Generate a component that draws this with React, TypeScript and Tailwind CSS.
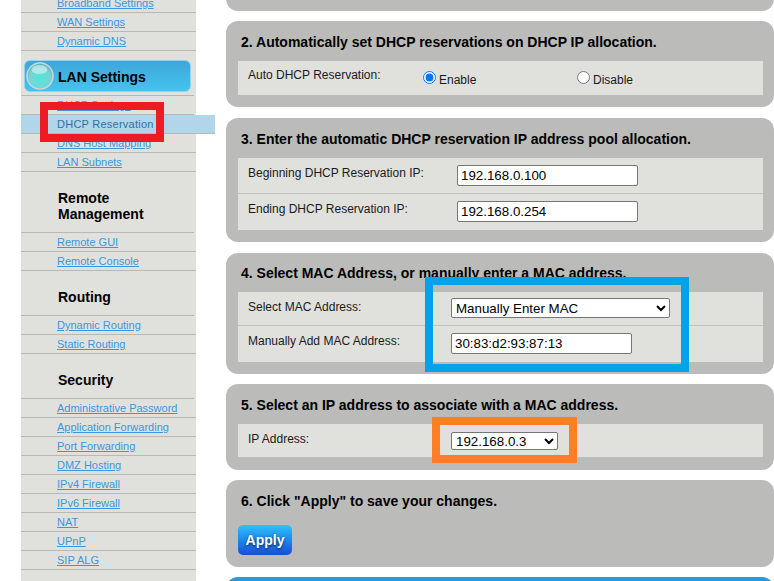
const topLinks = ['Broadband Settings', 'WAN Settings', 'Dynamic DNS'];
const remoteLinks = ['Remote GUI', 'Remote Console'];
const routingLinks = ['Dynamic Routing', 'Static Routing'];
const securityLinks = [
  'Administrative Password',
  'Application Forwarding',
  'Port Forwarding',
  'DMZ Hosting',
  'IPv4 Firewall',
  'IPv6 Firewall',
  'NAT',
  'UPnP',
  'SIP ALG',
];

function NavLink({ label }: { label: string }) {
  return (
    <div className="h-[19px] border-b border-[#b8b9b7] pl-9 text-[11px] leading-[18px]">
      <a className="text-[#3b97e0] underline">{label}</a>
    </div>
  );
}

function NavGroup({ title, links }: { title: string[]; links: string[] }) {
  return (
    <div className="mt-[18px]">
      <h3 className="mb-[10px] pl-[37px] text-[14px] font-bold leading-4 text-black">
        {title.map(line => (
          <div key={line}>{line}</div>
        ))}
      </h3>
      <div className="w-[173px] border-t border-[#b8b9b7]">
        <div className="w-[175px]">
          {links.map(link => (
            <NavLink key={link} label={link} />
          ))}
        </div>
      </div>
    </div>
  );
}

function Sidebar() {
  return (
    <aside className="ml-[21px] h-[600px] w-[175px] shrink-0 bg-[#e0e1dd]">
      <div className="-mt-[6px]">
        {topLinks.map(link => (
          <NavLink key={link} label={link} />
        ))}
      </div>

      {/* LAN Settings header */}
      <div className="ml-[3px] mt-[9px] flex h-[32px] w-[167px] items-center rounded-[6px] border border-[#8fd3ee] bg-gradient-to-b from-[#3ea6d8] to-[#45c3f0]">
        <svg width="28" height="28" viewBox="0 0 28 28" className="ml-[1px]">
          <defs>
            <radialGradient id="orb" cx="50%" cy="60%" r="55%">
              <stop offset="0%" stopColor="#4fe8d8" />
              <stop offset="75%" stopColor="#78d4d4" />
              <stop offset="100%" stopColor="#5fb4c4" />
            </radialGradient>
          </defs>
          <circle cx="14" cy="14" r="13" fill="url(#orb)" stroke="#c4d8d8" strokeWidth="1.5" />
          <ellipse cx="13.5" cy="7.5" rx="8" ry="4.5" fill="#ffffff" opacity="0.45" />
        </svg>
        <span className="ml-[4px] pt-[2px] text-[14px] font-bold text-black">LAN Settings</span>
      </div>
      <div className="mt-[3px] w-[173px] border-t border-[#b8b9b7]">
        <NavLink label="DHCP Settings" />
        <div className="h-[19px] w-[194px] border-b border-[#b8b9b7] bg-[#b2d6e9] pl-9 text-[11px] leading-[18px] tracking-[0.25px] text-[#2f6fa5]">
          DHCP Reservation
        </div>
        <div className="w-[175px]">
          <NavLink label="DNS Host Mapping" />
          <NavLink label="LAN Subnets" />
        </div>
      </div>

      <NavGroup title={['Remote', 'Management']} links={remoteLinks} />
      <NavGroup title={['Routing']} links={routingLinks} />
      <NavGroup title={['Security']} links={securityLinks} />
    </aside>
  );
}

function Panel({ title, className, children }: { title: string; className: string; children: React.ReactNode }) {
  return (
    <section className={`rounded-[12px] bg-[#bbbcba] pl-3 pr-[11px] ${className}`}>
      <h2 className="pl-[3px] text-[14px] font-bold leading-4 text-black">{title}</h2>
      {children}
    </section>
  );
}

function Row({ label, h, last, children }: { label: string; h: string; last?: boolean; children: React.ReactNode }) {
  return (
    <div className={`flex ${h} ${last ? '' : 'border-b border-[#c2c3c0]'} bg-[#e0e1dd]`}>
      <div className="w-[205px] shrink-0 pl-[10px] pt-[6px] text-[12px] leading-[18px] text-[#1a1a1a]">{label}</div>
      <div className="flex-1">{children}</div>
    </div>
  );
}

function TextBox({ value, width }: { value: string; width: string }) {
  return (
    <input
      readOnly
      value={value}
      className={`mt-[7px] block h-[21px] ${width} rounded-[2px] border border-[#767676] bg-white px-[3px] text-[13.33px] text-black`}
    />
  );
}

export default function App() {
  return (
    <div className="flex h-[581px] w-[774px] overflow-hidden bg-white [font-family:'Liberation_Sans',Arial,sans-serif]">
      <Sidebar />

      <main className="ml-[30px] w-[548px] shrink-0">
        <div className="-mt-[20px] h-[31px] rounded-[12px] bg-[#bbbcba]" />

        <Panel title="2. Automatically set DHCP reservations on DHCP IP allocation." className="mt-[10px] h-[86px] pt-[13px]">
          <div className="mt-[11px] flex h-[34px] bg-[#e0e1dd]">
            <div className="w-[185px] shrink-0 pl-[10px] pt-[5px] text-[12px] leading-[18px] text-[#1a1a1a]">
              Auto DHCP Reservation:
            </div>
            <label className="flex w-[154px] items-start gap-[3px] pt-[10px] text-[12px] leading-[18px] text-[#1a1a1a]">
              <input type="radio" name="auto" defaultChecked className="m-0 h-[13px] w-[13px]" />
              Enable
            </label>
            <label className="flex items-start gap-[3px] pt-[10px] text-[12px] leading-[18px] text-[#1a1a1a]">
              <input type="radio" name="auto" className="m-0 h-[13px] w-[13px]" />
              Disable
            </label>
          </div>
        </Panel>

        <Panel title="3. Enter the automatic DHCP reservation IP address pool allocation." className="mt-[11px] h-[124px] pt-[13px]">
          <div className="mt-[11px]">
            <Row label="Beginning DHCP Reservation IP:" h="h-[36px]">
              <div className="ml-[14px]"><TextBox value="192.168.0.100" width="w-[181px]" /></div>
            </Row>
            <Row label="Ending DHCP Reservation IP:" h="h-[36px]" last>
              <div className="ml-[14px]"><TextBox value="192.168.0.254" width="w-[181px]" /></div>
            </Row>
          </div>
        </Panel>

        <Panel title="4. Select MAC Address, or manually enter a MAC address." className="mt-[11px] h-[121px] pt-[12px]">
          <div className="mt-[11px]">
            <Row label="Select MAC Address:" h="h-[34px]">
              <select
                defaultValue="manual"
                className="ml-[8px] mt-[6px] block h-[20px] w-[219px] rounded-[2px] border border-[#767676] bg-white text-[13.33px] text-black"
              >
                <option value="manual">Manually Enter MAC</option>
              </select>
            </Row>
            <Row label="Manually Add MAC Address:" h="h-[36px]" last>
              <div className="ml-[8px]"><TextBox value="30:83:d2:93:87:13" width="w-[181px]" /></div>
            </Row>
          </div>
        </Panel>

        <Panel title="5. Select an IP address to associate with a MAC address." className="mt-[10px] h-[86px] pt-[13px]">
          <div className="mt-[11px]">
            <Row label="IP Address:" h="h-[33px]" last>
              <select
                defaultValue="ip"
                className="ml-[8px] mt-[8px] block h-[18px] w-[107px] rounded-[2px] border border-[#767676] bg-white text-[13.33px] text-black"
              >
                <option value="ip">192.168.0.3</option>
              </select>
            </Row>
          </div>
        </Panel>

        <Panel title='6. Click "Apply" to save your changes.' className="mt-[10px] h-[87px] pt-[13px]">
          <button className="mt-[16px] block h-[30px] w-[54px] rounded-[5px] bg-gradient-to-b from-[#33c0fb] to-[#1d4bd8] text-[14px] font-bold text-white [text-shadow:0_1px_3px_rgba(0,0,0,0.7)]">
            Apply
          </button>
        </Panel>

        <div className="mt-[10px] h-[30px] rounded-t-[12px] bg-[#2b9ad9]" />
      </main>

      {/* Annotation boxes drawn over the screenshot */}
      <div className="absolute left-[40px] top-[102px] h-[40px] w-[124px] border-[8px] border-[#ed1c24]" />
      <div className="absolute left-[425px] top-[277px] h-[95px] w-[264px] border-[8px] border-[#00a2e8]" />
      <div className="absolute left-[432px] top-[417px] h-[46px] w-[145px] border-[8px] border-[#ff7f27]" />
    </div>
  );
}
